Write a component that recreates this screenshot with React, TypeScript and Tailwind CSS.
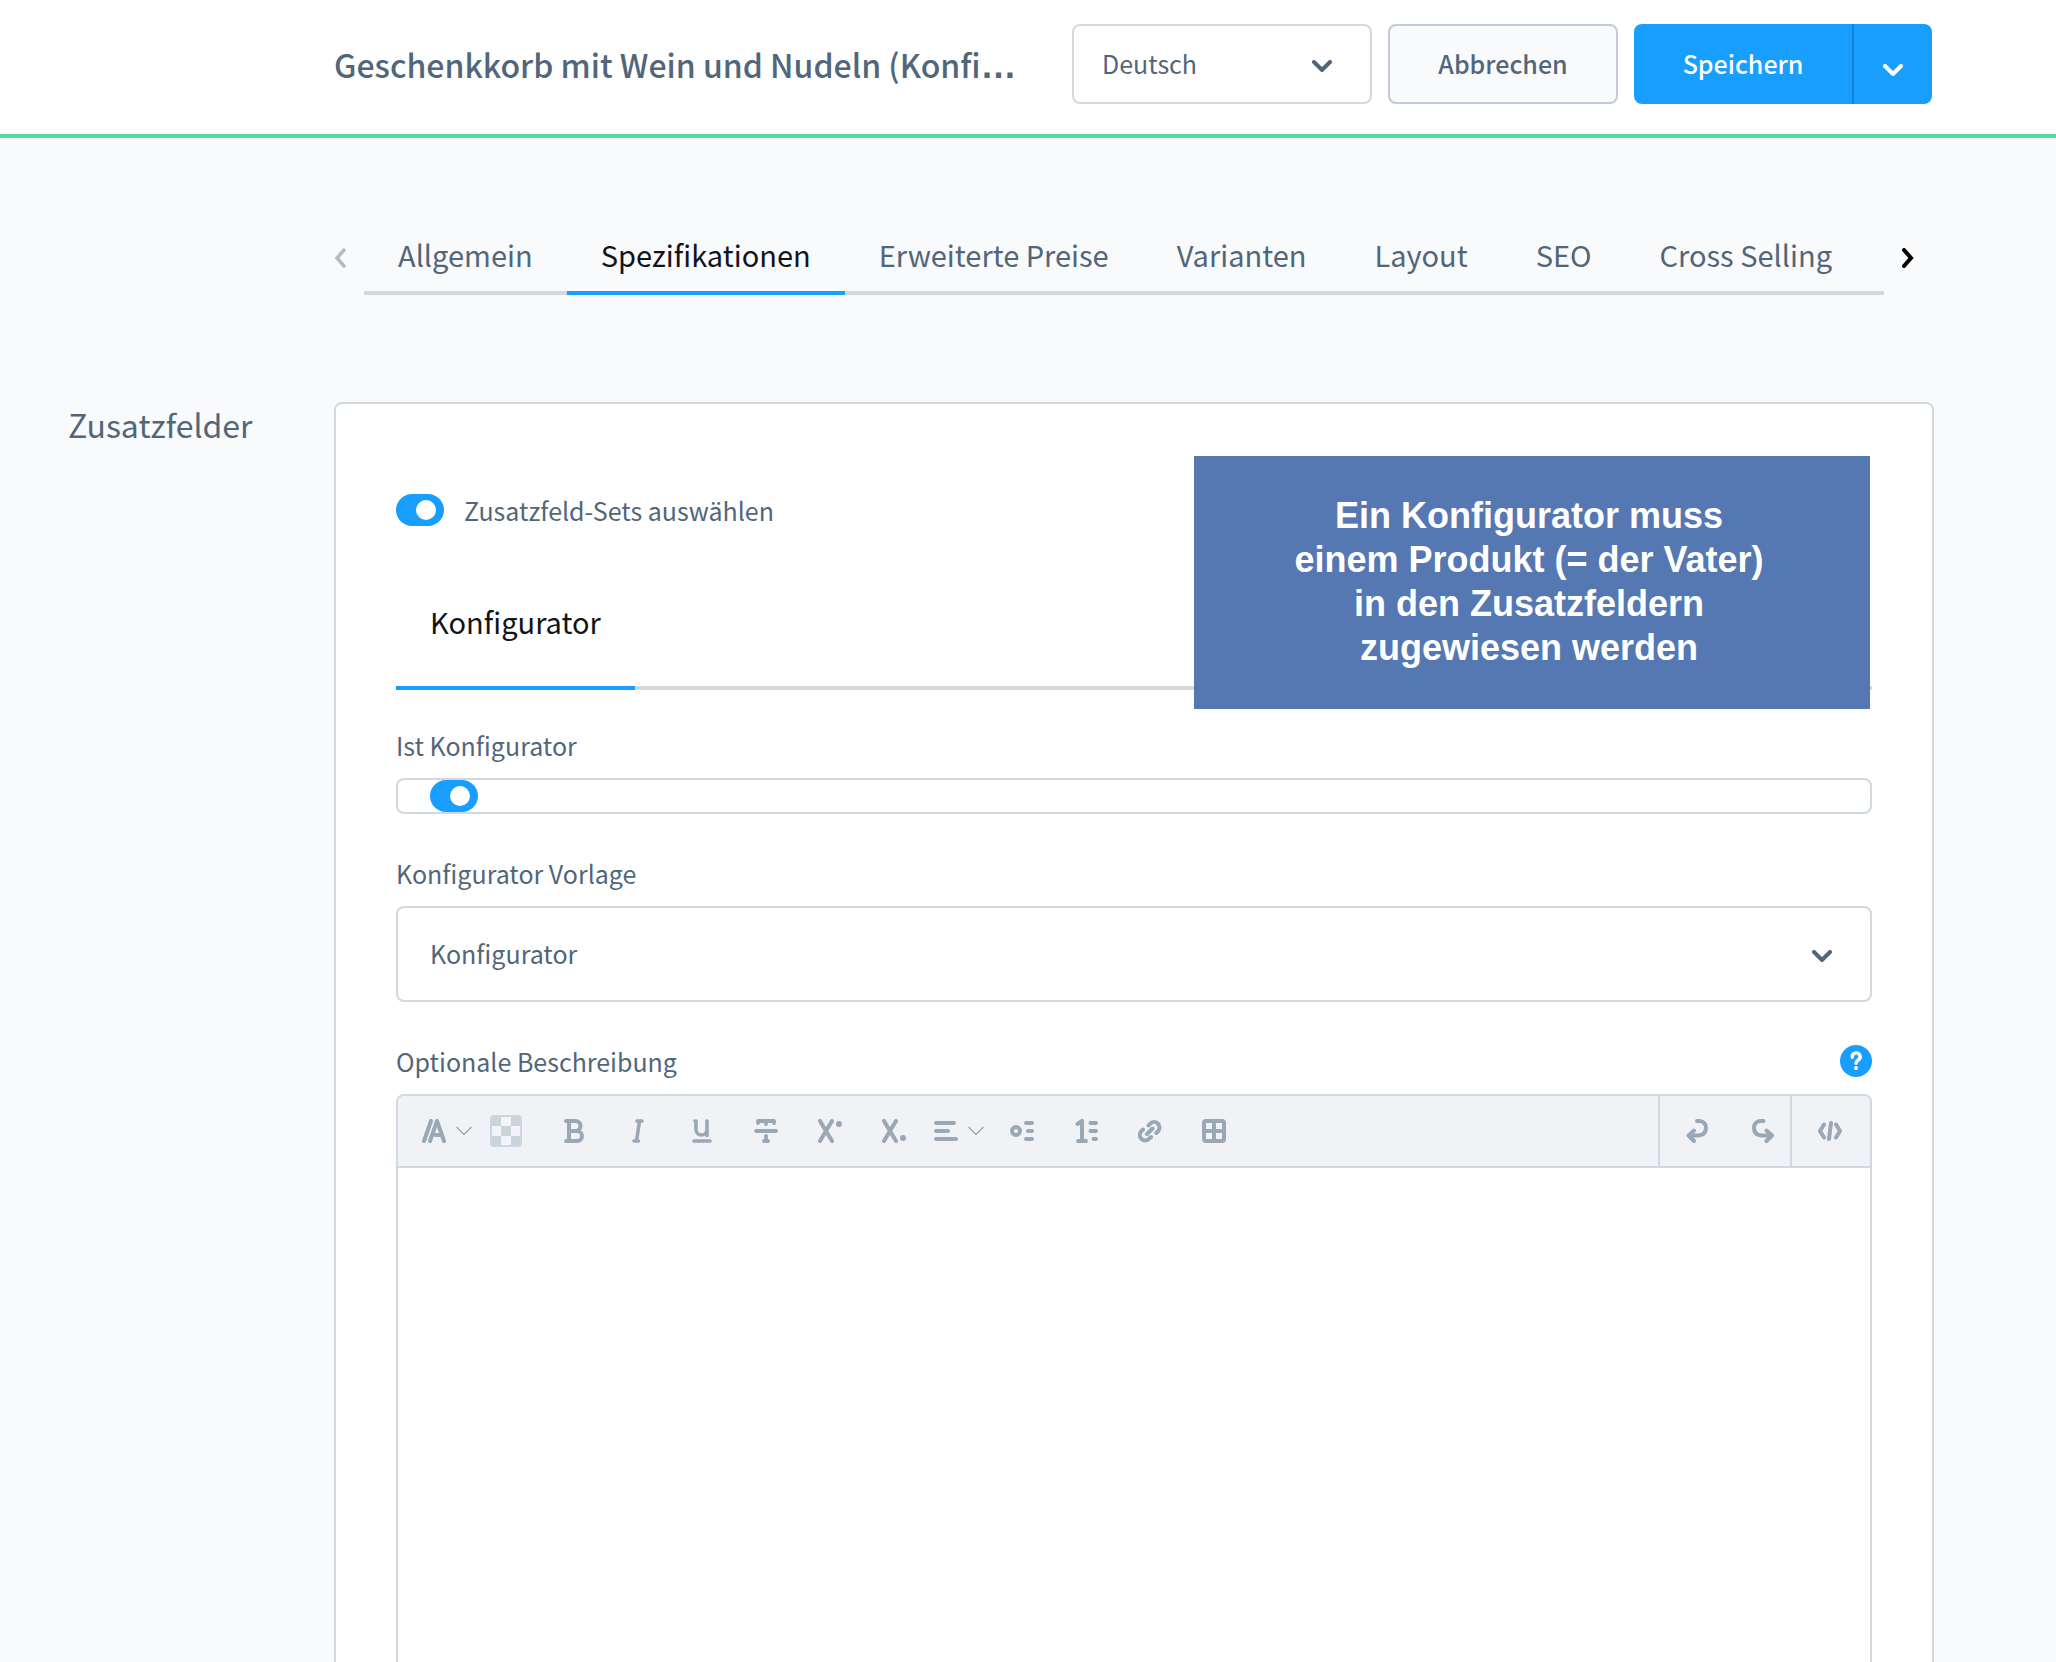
import { ReactNode, useState } from "react";

const TABS = ["Allgemein", "Spezifikationen", "Erweiterte Preise", "Varianten", "Layout", "SEO", "Cross Selling"];

function Icon({ children }: { children: ReactNode }) {
  return (
    <svg
      viewBox="0 0 24 24"
      className="h-6 w-6"
      fill="none"
      stroke="currentColor"
      strokeWidth="4"
      strokeLinecap="round"
      strokeLinejoin="round"
      aria-hidden="true"
    >
      {children}
    </svg>
  );
}

function Chevron({ className = "" }: { className?: string }) {
  return (
    <svg
      viewBox="0 0 20 12"
      className={`h-3 w-5 ${className}`}
      fill="none"
      stroke="currentColor"
      strokeWidth="4"
      strokeLinecap="round"
      strokeLinejoin="round"
      aria-hidden="true"
    >
      <path d="M2 2l8 8 8-8" />
    </svg>
  );
}

function ThinChevron() {
  return (
    <svg viewBox="0 0 16 10" className="h-2.5 w-4" fill="none" stroke="currentColor" strokeWidth="1.3" aria-hidden="true">
      <path d="M.5 1L8 8.5 15.5 1" />
    </svg>
  );
}

function Toggle({ id }: { id: string }) {
  const [on, setOn] = useState(true);

  return (
    <input
      id={id}
      type="checkbox"
      checked={on}
      onChange={(e) => setOn(e.target.checked)}
      className="flex h-8 w-12 shrink-0 cursor-pointer appearance-none items-center rounded-full bg-[#c2cad2] px-2 before:h-5 before:w-5 before:rounded-full before:bg-white before:content-[''] checked:justify-end checked:bg-[#189eff]"
    />
  );
}

function ToolButton({ label, children }: { label: string; children: ReactNode }) {
  return (
    <button type="button" aria-label={label} className="flex w-16 items-center justify-center">
      {children}
    </button>
  );
}

function Header() {
  return (
    <header className="flex items-center gap-4 border-b-4 border-[#57d9a3] bg-white pt-6 pr-[124px] pb-[30px] pl-[334px]">
      <h1 className="min-w-0 flex-1 truncate text-[32px] leading-[48px] font-medium">
        Geschenkkorb mit Wein und Nudeln (Konfi<span className="font-['Liberation_Sans'] text-4xl leading-none font-bold">…</span>
      </h1>

      <div className="relative w-[300px]">
        <select
          aria-label="Sprache"
          className="h-20 w-full appearance-none rounded-lg border-2 border-[#d1d9e0] bg-white px-7 text-[25px]"
        >
          <option>Deutsch</option>
        </select>
        <Chevron className="pointer-events-none absolute top-9 right-10" />
      </div>

      <button type="button" className="h-20 w-[230px] rounded-lg border-2 border-[#c2c9d9] bg-[#f9fafc] text-[25px] font-medium">
        Abbrechen
      </button>

      <div className="flex h-20 overflow-hidden rounded-lg bg-[#189eff] text-white">
        <button type="button" className="w-[218px] text-[25px] font-medium">
          Speichern
        </button>
        <button
          type="button"
          aria-label="Weitere Speicheroptionen"
          className="flex w-20 items-center justify-center border-l-2 border-[#1384d6] pt-3"
        >
          <Chevron />
        </button>
      </div>
    </header>
  );
}

function TabBar() {
  return (
    <div className="flex pt-[95px] pr-[122px] pl-[334px]">
      <button type="button" aria-label="Zurück" className="flex w-[30px] items-center text-[#b8babd]">
        <svg viewBox="0 0 12 20" className="-mt-3 h-5 w-3" fill="none" stroke="currentColor" strokeWidth="3.5" strokeLinecap="round">
          <path d="M10 2L3 10l7 8" />
        </svg>
      </button>
      <nav className="flex flex-1 border-b-4 border-[#d1d9e0]">
        {TABS.map((tab) => (
          <a
            key={tab}
            href="#"
            className={
              tab === "Spezifikationen"
                ? "-mb-1 border-b-4 border-[#189eff] px-[34px] pb-4 text-[29px] leading-[42px] text-[#111419]"
                : "px-[34px] pb-4 text-[29px] leading-[42px]"
            }
          >
            {tab}
          </a>
        ))}
      </nav>
      <button type="button" aria-label="Weiter" className="flex w-[50px] items-center pl-[18px] text-black">
        <svg viewBox="0 0 12 20" className="-mt-3 h-5 w-3" fill="none" stroke="currentColor" strokeWidth="4" strokeLinecap="round">
          <path d="M2 2l7 8-7 8" />
        </svg>
      </button>
    </div>
  );
}

function EditorToolbar() {
  return (
    <div className="flex h-[72px] border-b-2 border-[#d1d9e0] bg-[#f0f2f6] pl-4 text-[#9aa8b6]">
      <div className="flex flex-1">
        <button type="button" aria-label="Absatz" className="flex w-16 items-center gap-2.5 pl-2">
          <Icon>
            <path d="M2 22L9 2M8 22l7-20 7 20M13.5 16h4" />
          </Icon>
          <ThinChevron />
        </button>
        <button type="button" aria-label="Textfarbe" className="flex w-16 items-center pl-3">
          <svg viewBox="0 0 32 32" className="h-8 w-8" aria-hidden="true">
            <rect width="32" height="32" rx="4" fill="#cdd7dd" />
            <path fill="#c9d4db" d="M2 2h9v9H2zM21 2h9v9h-9zM11 11h10v10H11zM2 21h9v9H2zM21 21h9v9h-9z" />
            <path fill="#f2f4f7" d="M11 2h10v9H11zM2 11h9v10H2zM21 11h9v10h-9zM11 21h10v9H11z" />
          </svg>
        </button>
        <ToolButton label="Fett">
          <Icon>
            <path d="M4 2h9.5a5 5 0 0 1 0 10H7M7 2v20M13.5 12H15a5 5 0 0 1 0 10H4" />
          </Icon>
        </ToolButton>
        <ToolButton label="Kursiv">
          <Icon>
            <path d="M11 2h5M8 22h4.5M13.5 2l-3 20" strokeWidth="3.6" />
          </Icon>
        </ToolButton>
        <ToolButton label="Unterstrichen">
          <Icon>
            <path d="M5 2h1v8.5a5.500 5.500 0 0 0 11 0V2v14.500M4 22h16" strokeWidth="3.6" />
          </Icon>
        </ToolButton>
        <ToolButton label="Durchgestrichen">
          <Icon>
            <path d="M4 4V2h16v2M12 2v3M2 12h20M12 17v5M10 22h4" strokeWidth="3.8" />
          </Icon>
        </ToolButton>
        <ToolButton label="Hochgestellt">
          <Icon>
            <path d="M2 2l12 20M14 2L2 22" />
            <circle cx="21" cy="5" r="3" fill="currentColor" stroke="none" />
          </Icon>
        </ToolButton>
        <ToolButton label="Tiefgestellt">
          <Icon>
            <path d="M2 2l12 20M14 2L2 22" />
            <circle cx="21" cy="19" r="3" fill="currentColor" stroke="none" />
          </Icon>
        </ToolButton>
        <button type="button" aria-label="Ausrichtung" className="flex w-16 items-center gap-2.5 pl-2">
          <Icon>
            <path d="M2 4h18M2 12h12M2 20h20" />
          </Icon>
          <ThinChevron />
        </button>
        <ToolButton label="Aufzählung">
          <Icon>
            <circle cx="6" cy="12" r="4" />
            <path d="M16 4h6M18 12h4M16 20h6" />
          </Icon>
        </ToolButton>
        <ToolButton label="Nummerierung">
          <Icon>
            <path d="M3.5 5L8 2v20M4 22h8M16.5 4H22M16.5 12H22M19.5 20H22" />
          </Icon>
        </ToolButton>
        <ToolButton label="Link">
          <Icon>
            <path d="M10.5 6.5L12 4.800a5.400 5.400 0 0 1 8 7.500l-1.700 1.700M5 10.500l-1.700 1.700a5.400 5.400 0 0 0 8 7.500l1.700-1.700M9 15l5.500-5.500" />
          </Icon>
        </ToolButton>
        <ToolButton label="Tabelle">
          <Icon>
            <rect x="2" y="2" width="20" height="20" rx="2" />
            <path d="M12 2v20M2 12h20" />
          </Icon>
        </ToolButton>
      </div>
      <div className="flex gap-[42px] border-l-2 border-[#d1d9e0] pr-3.5 pl-[26px]">
        <button type="button" aria-label="Rückgängig">
          <Icon>
            <path d="M11 2h2.5a6.500 6.500 0 0 1 6.500 7c0 5-3 7-7.500 7.500H3M8 11.500l-5.500 5 5.500 5.500" />
          </Icon>
        </button>
        <button type="button" aria-label="Wiederholen">
          <Icon>
            <path d="M11.5 2H9a6.500 6.500 0 0 0-7 7c0 5 3 7 7.500 7.500H20M14.500 11.500l5.500 5-5.500 5.500" />
          </Icon>
        </button>
      </div>
      <div className="flex border-l-2 border-[#d1d9e0] pr-7 pl-[26px]">
        <button type="button" aria-label="Quellcode">
          <Icon>
            <path d="M6 5.5L2 12l4 6.500M13 4l-2 16M18 5.500l4 6.500-4 6.500" />
          </Icon>
        </button>
      </div>
    </div>
  );
}

function CustomFieldsCard() {
  return (
    <section className="relative flex-1 rounded-lg border-2 border-[#d1d9e0] bg-white px-[60px] pt-[90px] pb-[60px]">
      <div className="flex items-center gap-5">
        <Toggle id="select-sets" />
        <label htmlFor="select-sets" className="text-[25px] leading-8">
          Zusatzfeld-Sets auswählen
        </label>
      </div>

      <nav className="mt-[60px] flex border-b-4 border-[#d1d9e0]">
        <a
          href="#"
          className="-mb-1 border-b-4 border-[#189eff] px-[34px] pb-[30px] text-[29px] leading-[70px] text-[#111419]"
        >
          Konfigurator
        </a>
      </nav>

      <label htmlFor="is-configurator" className="mt-9 mb-3.5 block text-[25px] leading-[38px]">
        Ist Konfigurator
      </label>
      <div className="rounded-lg border-2 border-[#d1d9e0] px-8">
        <Toggle id="is-configurator" />
      </div>

      <label htmlFor="template" className="mt-10 mb-3.5 block text-[25px] leading-[38px]">
        Konfigurator Vorlage
      </label>
      <div className="relative">
        <select
          id="template"
          className="block h-24 w-full appearance-none rounded-lg border-2 border-[#d1d9e0] bg-white px-8 text-[25px]"
        >
          <option>Konfigurator</option>
        </select>
        <Chevron className="pointer-events-none absolute top-11 right-10" />
      </div>

      <div className="mt-10 mb-3.5 flex items-center justify-between">
        <label htmlFor="description" className="text-[25px] leading-[38px]">
          Optionale Beschreibung
        </label>
        <button type="button" aria-label="Hilfe">
          <svg viewBox="0 0 32 32" className="h-8 w-8" fill="none">
            <circle cx="16" cy="16" r="16" fill="#189eff" />
            <path
              d="M12.3 12.300a3.900 3.900 0 1 1 5.700 3c-1.400.8-2 1.400-2 3"
              stroke="#fff"
              strokeWidth="3.4"
              strokeLinecap="round"
            />
            <circle cx="16" cy="23" r="2" fill="#fff" />
          </svg>
        </button>
      </div>
      <div className="overflow-hidden rounded-lg border-2 border-[#d1d9e0]">
        <EditorToolbar />
        <textarea id="description" className="block h-[640px] w-full resize-none p-8 text-[25px] outline-none" />
      </div>

      {/* Hint on top of the set selection */}
      <p className="absolute top-[52px] right-[62px] h-[253px] w-[676px] bg-[#5578b2] pt-[38px] pr-1.5 text-center font-['Liberation_Sans',sans-serif] text-4xl leading-[44px] font-bold text-white">
        Ein Konfigurator muss
        <br />
        einem Produkt (= der Vater)
        <br />
        in den Zusatzfeldern
        <br />
        zugewiesen werden
      </p>
    </section>
  );
}

export default function App() {
  return (
    <div className="h-screen overflow-hidden bg-[#f9fafc] font-['Noto_Sans_CJK_SC',sans-serif] text-[#52667a]">
      <Header />
      <TabBar />
      <main className="mt-[107px] flex pr-[122px]">
        <h2 className="w-[334px] pl-[68px] text-[32px] leading-[44px]">Zusatzfelder</h2>
        <CustomFieldsCard />
      </main>
    </div>
  );
}
